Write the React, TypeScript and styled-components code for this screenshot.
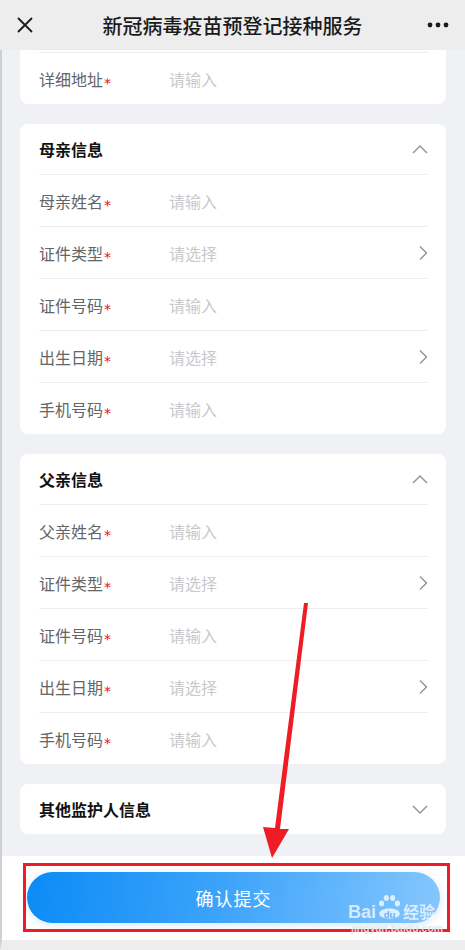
import React from "react"
import styled, { createGlobalStyle } from "styled-components"

const GlobalStyle = createGlobalStyle`
    html, body {
        margin: 0;
        padding: 0;
        background: #f0f1f5;
        font-family: "Noto Sans CJK SC", "Noto Sans", sans-serif;
        -webkit-font-smoothing: antialiased;
    }
    * { box-sizing: border-box; }
`

const Page = styled.div`
    position: relative;
    width: 465px;
    height: 950px;
    overflow: hidden;
    display: flex;
    flex-direction: column;
    background: #f0f1f5;
`

const NavBar = styled.header`
    height: 50px;
    flex-shrink: 0;
    display: flex;
    align-items: center;
    justify-content: space-between;
    padding: 0 16px;
    background: #ededed;
`

const NavTitle = styled.h1`
    margin: 0;
    font-size: 20px;
    font-weight: 500;
    color: #1b1b1b;
`

const NavIcon = styled.span<{ $end?: boolean }>`
    width: 28px;
    display: flex;
    align-items: center;
    justify-content: ${(p) => (p.$end ? "flex-end" : "flex-start")};
`

const Content = styled.main`
    flex: 1;
    display: flex;
    flex-direction: column;
    gap: 20px;
    padding: 0 19px 20px 18px;
    border-left: 2px solid #cfd0d4;
`

const Card = styled.section<{ $clipped?: boolean }>`
    background: #fff;
    border-radius: ${(p) => (p.$clipped ? "0 0 8px 8px" : "8px")};
    padding: ${(p) => (p.$clipped ? "2px 18px 0 19px" : "0 18px 0 19px")};
`

const CardHead = styled.div`
    height: 50px;
    display: flex;
    align-items: center;
    justify-content: space-between;
    font-size: 16px;
    font-weight: 700;
    color: #111;
`

const Row = styled.div`
    height: 52px;
    display: flex;
    align-items: center;
    border-top: 1px solid #ebedf0;
    font-size: 16px;
`

const Label = styled.span`
    width: 130px;
    color: #646566;
    display: flex;
    align-items: center;
`

const Star = styled.span`
    color: #ee0a24;
    font-family: "DejaVu Sans", sans-serif;
    font-size: 14px;
    margin-left: 1px;
    position: relative;
    top: 4px;
`

const Placeholder = styled.span`
    flex: 1;
    color: #c8c9cc;
`

const Footer = styled.footer`
    position: relative;
    height: 94px;
    flex-shrink: 0;
    background: #fff;
    padding: 16px 25px 0 25px;
    border-bottom: 10px solid #ededed;
    border-left: 2px solid #cfd0d4;
`

const SubmitButton = styled.button`
    width: 413px;
    height: 51px;
    border: none;
    border-radius: 26px;
    background: linear-gradient(100deg, #0b8bf6 0%, #3aa2fa 45%, #86c6fd 100%);
    box-shadow: 0 2px 8px rgba(30, 140, 240, 0.18);
    color: #fff;
    font-family: inherit;
    font-size: 18px;
    letter-spacing: 1px;
`

const HighlightBox = styled.div`
    position: absolute;
    left: 21px;
    top: 7px;
    width: 427px;
    height: 69px;
    border: 3px solid #ee1c25;
    pointer-events: none;
`

const Watermark = styled.div`
    position: absolute;
    left: 346px;
    top: 38px;
    display: flex;
    flex-direction: column;
    align-items: flex-start;
    color: rgba(255, 255, 255, 0.72);
    pointer-events: none;
`

const MarkLine = styled.div`
    display: flex;
    align-items: flex-end;
    font-family: "Liberation Sans", sans-serif;
    font-weight: 700;
    font-size: 18px;
    line-height: 18px;
`

const MarkCjk = styled.span`
    font-family: "Noto Sans CJK SC", sans-serif;
    font-size: 16px;
    line-height: 19px;
`

const MarkSub = styled.div`
    font-family: "Liberation Sans", sans-serif;
    font-weight: 700;
    font-size: 10.5px;
    line-height: 12px;
    color: rgba(225, 230, 236, 0.9);
    margin: 1px 0 0 3px;
`

const ArrowLayer = styled.svg`
    position: absolute;
    left: 0;
    top: 0;
    pointer-events: none;
`

const Chevron = ({ dir }: { dir: "up" | "down" | "right" }) => {
    if (dir === "right") {
        return (
            <svg width="10" height="16" viewBox="0 0 10 16">
                <polyline points="2,1.5 8.5,8 2,14.5" fill="none" stroke="#969799" strokeWidth="1.5" />
            </svg>
        )
    }
    const pts = dir === "up" ? "1,9 8,2 15,9" : "1,2 8,9 15,2"
    return (
        <svg width="16" height="11" viewBox="0 0 16 11">
            <polyline points={pts} fill="none" stroke="#969799" strokeWidth="1.5" />
        </svg>
    )
}

type Field = { label: string; kind: "input" | "select" }

const personFields = (who: string): Field[] => [
    { label: `${who}姓名`, kind: "input" },
    { label: "证件类型", kind: "select" },
    { label: "证件号码", kind: "input" },
    { label: "出生日期", kind: "select" },
    { label: "手机号码", kind: "input" },
]

function FieldRow({ field }: { field: Field }) {
    return (
        <Row>
            <Label>
                {field.label}
                <Star>*</Star>
            </Label>
            <Placeholder>{field.kind === "input" ? "请输入" : "请选择"}</Placeholder>
            {field.kind === "select" && <Chevron dir="right" />}
        </Row>
    )
}

function Section({ title, fields, open }: { title: string; fields: Field[]; open: boolean }) {
    return (
        <Card>
            <CardHead>
                {title}
                <Chevron dir={open ? "up" : "down"} />
            </CardHead>
            {fields.map((f) => (
                <FieldRow key={f.label} field={f} />
            ))}
        </Card>
    )
}

export default function App() {
    return (
        <Page>
            <GlobalStyle />
            <NavBar>
                <NavIcon>
                    <svg width="18" height="18" viewBox="0 0 18 18">
                        <path d="M2 2 L16 16 M16 2 L2 16" stroke="#1b1b1b" strokeWidth="1.8" />
                    </svg>
                </NavIcon>
                <NavTitle>新冠病毒疫苗预登记接种服务</NavTitle>
                <NavIcon $end>
                    <svg width="22" height="6" viewBox="0 0 22 6">
                        <circle cx="3" cy="3" r="2.4" fill="#1b1b1b" />
                        <circle cx="11" cy="3" r="2.4" fill="#1b1b1b" />
                        <circle cx="19" cy="3" r="2.4" fill="#1b1b1b" />
                    </svg>
                </NavIcon>
            </NavBar>

            <Content>
                <Card $clipped>
                    <FieldRow field={{ label: "详细地址", kind: "input" }} />
                </Card>
                <Section title="母亲信息" fields={personFields("母亲")} open />
                <Section title="父亲信息" fields={personFields("父亲")} open />
                <Section title="其他监护人信息" fields={[]} open={false} />
            </Content>

            <Footer>
                <SubmitButton>确认提交</SubmitButton>
                <HighlightBox />
                <Watermark>
                    <MarkLine>
                        Bai
                        <svg width="27" height="27" viewBox="0 0 34 34">
                            <g fill="rgba(255,255,255,0.75)">
                                <ellipse cx="7" cy="12" rx="3.2" ry="3.8" />
                                <ellipse cx="13" cy="5" rx="3.2" ry="3.8" />
                                <ellipse cx="21" cy="5" rx="3.2" ry="3.8" />
                                <ellipse cx="27" cy="12" rx="3.2" ry="3.8" />
                                <path d="M4 25 C4 16 30 16 30 25 C30 33 4 33 4 25 Z" />
                            </g>
                            <text x="17" y="30" textAnchor="middle" fontFamily="Liberation Sans, sans-serif" fontWeight="700" fontSize="12" fill="#62b4fa">du</text>
                        </svg>
                        <MarkCjk>经验</MarkCjk>
                    </MarkLine>
                    <MarkSub>jingyan.baidu.com</MarkSub>
                </Watermark>
            </Footer>

            <ArrowLayer width="465" height="950" viewBox="0 0 465 950">
                <polygon points="304,603 308,603 280,829 289,829 272,858 263,827 275,828" fill="#ee1c25" />
            </ArrowLayer>
        </Page>
    )
}
